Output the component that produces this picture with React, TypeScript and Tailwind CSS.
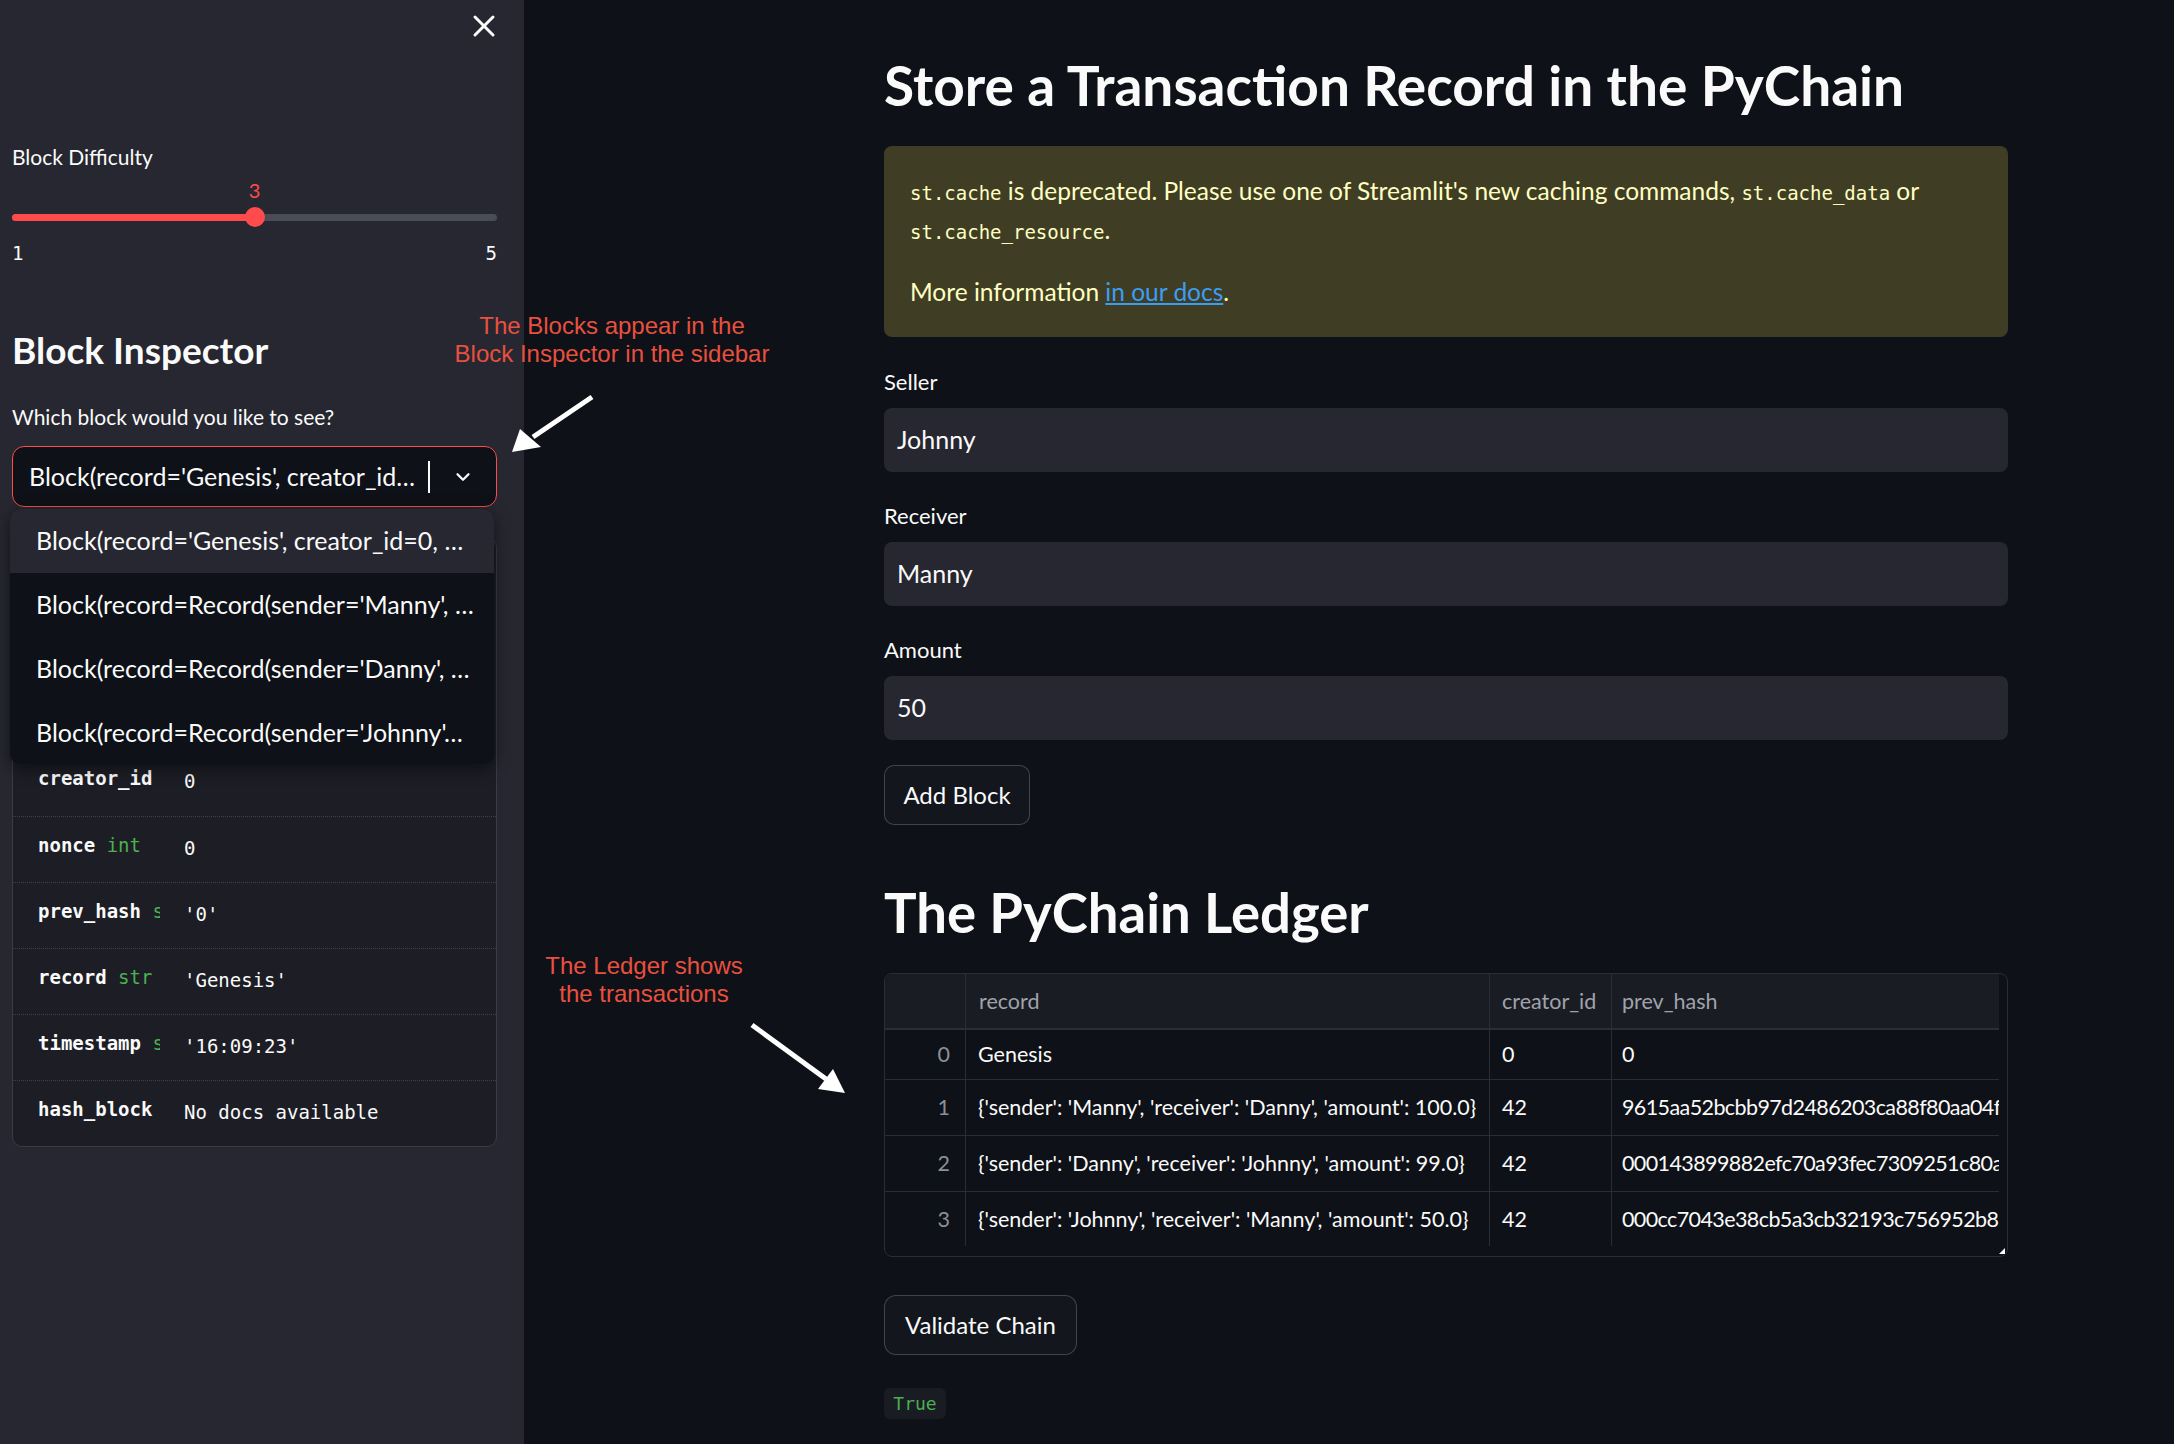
import { X, ChevronDown } from 'lucide-react';

const options = [
  "Block(record='Genesis', creator_id=0, …",
  "Block(record=Record(sender='Manny', …",
  "Block(record=Record(sender='Danny', …",
  "Block(record=Record(sender='Johnny'…",
];

const fields = [
  { key: 'creator_id', type: 'int', value: '0' },
  { key: 'nonce', type: 'int', value: '0' },
  { key: 'prev_hash', type: 'str', value: "'0'" },
  { key: 'record', type: 'str', value: "'Genesis'" },
  { key: 'timestamp', type: 'str', value: "'16:09:23'" },
  { key: 'hash_block', type: '', value: 'No docs available' },
];

const ledger = [
  { record: 'Genesis', creator: '0', prev: '0', time: '16:09:23', h: 'h-[50px]' },
  {
    record: "{'sender': 'Manny', 'receiver': 'Danny', 'amount': 100.0}",
    creator: '42',
    prev: '9615aa52bcbb97d2486203ca88f80aa04fa1c3e0b7d2e5f1',
    time: '16:10:41',
    h: 'h-[56px]',
  },
  {
    record: "{'sender': 'Danny', 'receiver': 'Johnny', 'amount': 99.0}",
    creator: '42',
    prev: '000143899882efc70a93fec7309251c80a9d4e2b61f07a3c',
    time: '16:11:05',
    h: 'h-[56px]',
  },
  {
    record: "{'sender': 'Johnny', 'receiver': 'Manny', 'amount': 50.0}",
    creator: '42',
    prev: '000cc7043e38cb5a3cb32193c756952b86e01d9f4a7c2b35',
    time: '16:11:38',
    h: 'h-[56px]',
  },
];

function TextField({ label, value }: { label: string; value: string }) {
  return (
    <div>
      <div className="text-[22px] leading-[26px] text-[#fafafa]">{label}</div>
      <div className="mt-[13px] h-[64px] rounded-[8px] bg-[#262730] flex items-center pl-[13px] text-[25px] text-[#fafafa]">
        {value}
      </div>
    </div>
  );
}

function Sidebar() {
  return (
    <div className="relative w-[524px] shrink-0 h-full bg-[#262730] pl-[12px] pr-[27px]">
      {/* close button */}
      <div className="flex justify-end pt-[8px] -mr-[5px]">
        <X size={36} strokeWidth={2} className="text-[#fafafa]" />
      </div>

      <div className="mt-[100px] text-[21px] leading-[25px] text-[#fafafa]">Block Difficulty</div>

      {/* slider */}
      <div className="mt-[9px]">
        <div className="relative h-[24px]">
          <span
            className="absolute top-0 -translate-x-1/2 text-[20px] leading-[24px] text-[#ff4b4b]"
            style={{ left: `${((3 - 1) / (5 - 1)) * 100}%` }}
          >
            3
          </span>
        </div>
        <div className="relative h-[30px] flex items-center">
          <div className="h-[7px] w-full rounded-full bg-[#4a4c56]">
            <div className="h-full rounded-full bg-[#ff4b4b]" style={{ width: '50%' }} />
          </div>
          <div
            className="absolute top-1/2 h-[20px] w-[20px] -translate-x-1/2 -translate-y-1/2 rounded-full bg-[#ff4b4b]"
            style={{ left: '50%' }}
          />
        </div>
        <div className="mt-[9px] flex justify-between h-[24px] items-center font-['DejaVu_Sans_Mono',monospace] text-[19px] text-[#fafafa]">
          <span>1</span>
          <span>5</span>
        </div>
      </div>

      <h2 className="mt-[63px] text-[37px] leading-[44px] font-bold text-[#fafafa]">Block Inspector</h2>

      <div className="mt-[32px] text-[21px] leading-[25px] text-[#fafafa]">Which block would you like to see?</div>

      {/* select */}
      <div className="mt-[17px] h-[61px] rounded-[12px] border border-[#ff4b4b] bg-[#0e1117] flex items-center pl-[16px] pr-[22px]">
        <span className="flex-1 whitespace-nowrap text-[25px] text-[#fafafa]">Block(record='Genesis', creator_id…</span>
        <span className="h-[32px] w-[2px] bg-[#fafafa] mr-[22px]" />
        <ChevronDown size={22} strokeWidth={2.5} className="text-[#fafafa]" />
      </div>

      {/* help panel, top part sits under the open menu */}
      <div className="mt-[30px] rounded-[10px] border border-[#3a3c45] bg-[#1d1e25] pl-[25px] font-['DejaVu_Sans_Mono',monospace] text-[19px] text-[#fafafa]">
        <div className="h-[212px]" />
        {fields.map((f, i) => (
          <div
            key={f.key}
            className={`h-[66px] flex items-center pb-[3px] border-t border-dotted border-[#3e404a] -ml-[25px] pl-[25px] ${i === 0 ? 'border-t-0' : ''}`}
          >
            <div className="w-[122px] shrink-0 overflow-hidden whitespace-nowrap font-bold -mt-[6px]">
              {f.key}
              {f.type && <span className="font-normal text-[#4caf50]"> {f.type}</span>}
            </div>
            <div className="ml-[24px] whitespace-nowrap">{f.value}</div>
          </div>
        ))}
      </div>

      {/* open dropdown menu */}
      <div className="absolute left-[10px] top-[509px] w-[484px] h-[255px] rounded-[10px] bg-[#0e1117] overflow-hidden shadow-[0_4px_16px_rgba(0,0,0,0.5)]">
        {options.map((o, i) => (
          <div
            key={o}
            className={`h-[64px] flex items-center pl-[26px] whitespace-nowrap text-[25px] text-[#fafafa] ${i === 0 ? 'bg-[#262730]' : ''}`}
          >
            {o}
          </div>
        ))}
      </div>
    </div>
  );
}

function LedgerTable() {
  return (
    <div className="relative mt-[28px] h-[284px] rounded-[8px] border border-[#2b2d36] pr-[8px] pb-[10px]">
      <div className="h-full overflow-hidden rounded-tl-[8px] text-[21.5px]">
        <div className="flex h-[56px] bg-[#1a1c24] border-b-2 border-[#2b2d36] text-[#a0a3ab]">
          <div className="w-[81px] shrink-0 border-r border-[#2b2d36]" />
          <div className="w-[524px] shrink-0 border-r border-[#2b2d36] pl-[13px] flex items-center">record</div>
          <div className="w-[122px] shrink-0 border-r border-[#2b2d36] pl-[12px] flex items-center">creator_id</div>
          <div className="w-[520px] shrink-0 border-r border-[#2b2d36] pl-[10px] flex items-center">prev_hash</div>
          <div className="w-[200px] shrink-0 pl-[13px] flex items-center">timestamp</div>
        </div>
        {ledger.map((r, i) => (
          <div key={i} className={`flex ${r.h} border-b border-[#2b2d36] text-[#fafafa]`}>
            <div className="w-[81px] shrink-0 border-r border-[#2b2d36] pr-[15px] flex items-center justify-end text-[#8d9098]">
              {i}
            </div>
            <div className="w-[524px] shrink-0 border-r border-[#2b2d36] pl-[12px] flex items-center whitespace-nowrap overflow-hidden">
              {r.record}
            </div>
            <div className="w-[122px] shrink-0 border-r border-[#2b2d36] pl-[12px] flex items-center">{r.creator}</div>
            <div className="w-[520px] shrink-0 border-r border-[#2b2d36] pl-[10px] flex items-center whitespace-nowrap overflow-hidden tracking-[-0.6px]">
              {r.prev}
            </div>
            <div className="w-[200px] shrink-0 pl-[13px] flex items-center">{r.time}</div>
          </div>
        ))}
      </div>
      {/* resize handle */}
      <svg className="absolute right-[2px] bottom-[2px]" width="6" height="6" viewBox="0 0 6 6">
        <path d="M6 0 L6 6 L0 6 Z" fill="#fafafa" />
      </svg>
    </div>
  );
}

function Main() {
  const code = "font-['DejaVu_Sans_Mono',monospace] text-[19px] leading-none";
  return (
    <div className="flex-1 h-full">
      <div className="ml-[360px] w-[1124px] pt-[52px]">
        <h1 className="text-[55px] leading-[66px] font-bold text-[#fafafa]">Store a Transaction Record in the PyChain</h1>

        {/* deprecation warning */}
        <div className="mt-[28px] rounded-[8px] bg-[#3f3e25] pl-[26px] pt-[25px] pb-[26px] text-[24.5px] leading-[39px] text-[#ffffc2]">
          <p className="whitespace-nowrap">
            <code className={code}>st.cache</code> is deprecated. Please use one of Streamlit's new caching commands,{' '}
            <code className={code}>st.cache_data</code> or
            <br />
            <code className={code}>st.cache_resource</code>.
          </p>
          <p className="mt-[23px]">
            More information <a className="text-[#3d9df3] underline underline-offset-2">in our docs</a>.
          </p>
        </div>

        <div className="mt-[32px] flex flex-col gap-[31px]">
          <TextField label="Seller" value="Johnny" />
          <TextField label="Receiver" value="Manny" />
          <TextField label="Amount" value="50" />
        </div>

        <button className="mt-[25px] h-[60px] w-[146px] rounded-[10px] border border-[#ffffff33] bg-[#13161d] text-[24px] text-[#fafafa]">
          Add Block
        </button>

        <h2 className="mt-[54px] text-[54.5px] leading-[66px] font-bold text-[#fafafa]">The PyChain Ledger</h2>

        <LedgerTable />

        <button className="mt-[38px] h-[60px] w-[193px] rounded-[12px] border border-[#ffffff33] bg-[#13161d] text-[24px] text-[#fafafa]">
          Validate Chain
        </button>

        <div className="mt-[33px] h-[31px] w-[62px] rounded-[6px] bg-[#1a1c23] flex items-center justify-center font-['DejaVu_Sans_Mono',monospace] text-[18px] text-[#4caf50]">
          True
        </div>
      </div>
    </div>
  );
}

export default function App() {
  return (
    <div className="relative flex w-[2174px] h-[1444px] overflow-hidden bg-[#0e1117] font-['Lato',sans-serif]">
      <Sidebar />
      <Main />

      {/* screenshot annotations */}
      <div className="absolute left-[440px] top-[312px] w-[344px] text-center font-['Liberation_Sans',Arial,sans-serif] text-[24px] leading-[28px] text-[#e8503f]">
        The Blocks appear in the
        <br />
        Block Inspector in the sidebar
      </div>
      <div className="absolute left-[524px] top-[952px] w-[240px] text-center font-['Liberation_Sans',Arial,sans-serif] text-[24px] leading-[28px] text-[#e8503f]">
        The Ledger shows
        <br />
        the transactions
      </div>
      <svg className="absolute left-0 top-0 pointer-events-none" width="2174" height="1444">
        <line x1="592" y1="397" x2="533" y2="437" stroke="white" strokeWidth="5" />
        <polygon points="512,452 520,429 541,447" fill="white" />
        <line x1="752" y1="1025" x2="826" y2="1079" stroke="white" strokeWidth="5" />
        <polygon points="845,1093 833,1069 818,1089" fill="white" />
      </svg>
    </div>
  );
}
